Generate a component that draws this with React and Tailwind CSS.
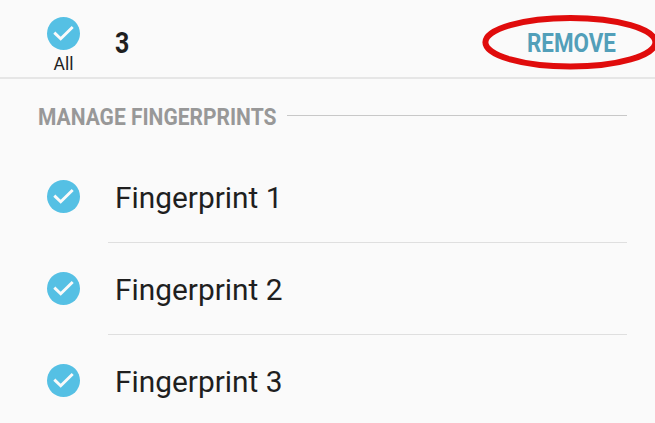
function CheckCircle() {
  return (
    <svg className="block size-[33px] shrink-0" viewBox="0 0 33 33" fill="none">
      <circle cx="16.5" cy="16.5" r="16.5" fill="#55c0e4" />
      <path d="M7.3 15.6 L13.7 21.7 L25.7 10" stroke="#fafafa" strokeWidth="2.9" />
    </svg>
  );
}

function Row({ label, last }) {
  return (
    <li className="flex h-[92px] pl-[47px] pr-[28px]">
      <div className="w-[61px] pt-[29px]">
        <CheckCircle />
      </div>
      <div className={`flex-1 pl-[6.5px] pt-[30px] ${last ? "" : "border-b border-[#dfdfdf]"}`}>
        <span className="inline-block origin-left scale-x-[1.012] whitespace-nowrap text-[29.5px] leading-[35px]">{label}</span>
      </div>
    </li>
  );
}

export default function App() {
  return (
    <div className="h-[423px] w-[655px] overflow-hidden bg-[#fafafa] font-['Roboto',sans-serif] text-[#1f1f1f]">
      <header className="flex h-[79px] border-b-2 border-[#e6e6e6]">
        <div className="ml-[43px] flex w-[41px] flex-col items-center pt-[17px]">
          <CheckCircle />
          <span className="mt-[4px] text-[17.5px] leading-[21px]">All</span>
        </div>
        <div className="ml-[31px] mt-[26px] h-[35px] origin-left scale-x-[0.86] text-[29px] font-bold leading-[35px]">3</div>
        <button className="relative ml-auto mr-[39px] mt-[26.5px] h-[32px] w-[89px] text-left text-[#529fb9]">
          <span className="block w-max origin-left scale-x-[0.86] text-[26px] font-bold leading-[32px]">REMOVE</span>
          <svg className="absolute -left-[46px] -top-[13.5px] h-[60px] w-[180px]" viewBox="0 0 180 60" fill="none">
            <ellipse cx="89.4" cy="29.3" rx="85" ry="24.3" stroke="#e00c0c" strokeWidth="6" />
          </svg>
        </button>
      </header>
      <main>
        <div className="flex h-[72px] items-start pl-[38px] pr-[28px]">
          <h2 className="mt-[23px] w-[249px] text-[24.5px] font-bold leading-[29px] text-[#989898]">
            <span className="block w-max origin-left scale-x-[0.857]">MANAGE FINGERPRINTS</span>
          </h2>
          <div className="mt-[36px] h-px flex-1 bg-[#c8c8c8]" />
        </div>
        <ul>
          <Row label="Fingerprint 1" />
          <Row label="Fingerprint 2" />
          <Row label="Fingerprint 3" last />
        </ul>
      </main>
    </div>
  );
}
